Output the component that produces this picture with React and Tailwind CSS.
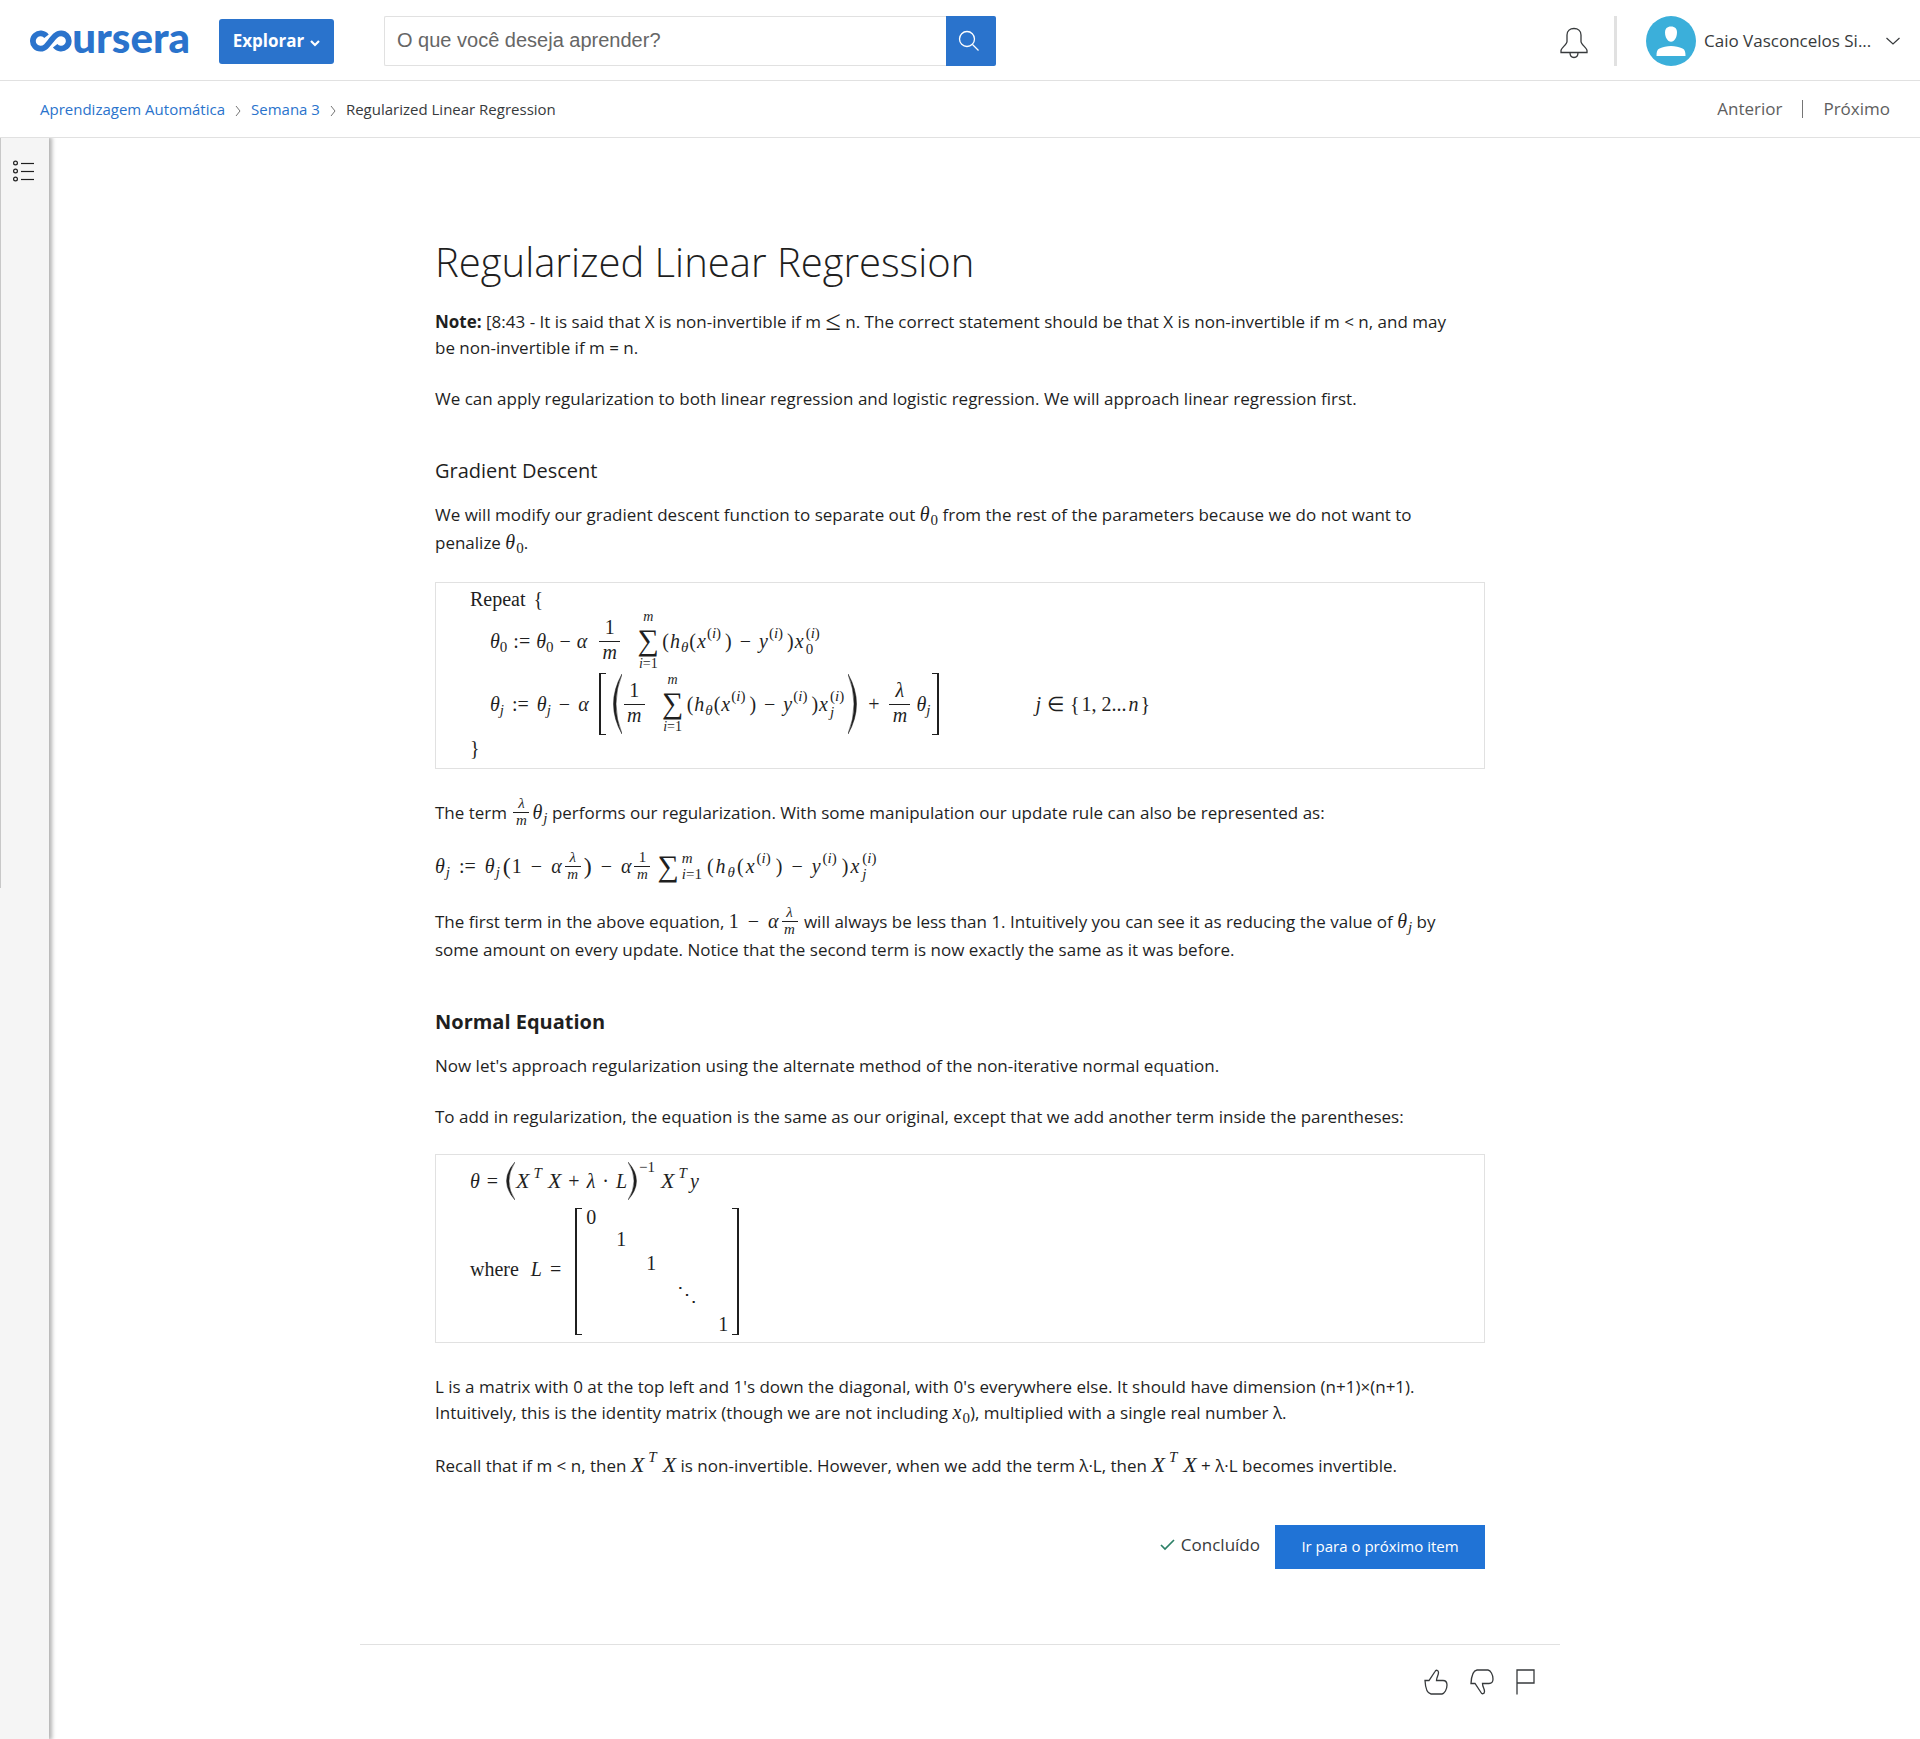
import React from "react";

const cx = (...c) => c.filter(Boolean).join(" ");

/* ---------- maths typesetting ---------- */

function Math({ children }) {
  return (
    <span className="-my-3 inline-flex h-7 items-center gap-px whitespace-nowrap pb-1 align-middle font-['Liberation_Serif',serif] text-[20px] leading-none">
      {children}
    </span>
  );
}

function Row({ children, className }) {
  return (
    <div className={cx("flex items-center whitespace-nowrap font-['Liberation_Serif',serif] text-[20px] leading-none", className)}>
      {children}
    </div>
  );
}

const Sub = ({ children }) => <sub className="static mt-3 text-[15px] leading-none align-baseline">{children}</sub>;
const Sup = ({ children }) => <sup className="static mb-4 text-[15px] leading-none align-baseline">{children}</sup>;
const Op = ({ children }) => <span className="mx-2">{children}</span>;

function Both({ sub, sup }) {
  return (
    <span className="ml-0.5 flex flex-col justify-center text-[15px] leading-none">
      <sup className="static mb-px text-[15px] leading-none align-baseline">{sup}</sup>
      <sub className="static text-[15px] leading-none align-baseline">{sub}</sub>
    </span>
  );
}

function Frac({ top, bottom, small }) {
  return (
    <span className={cx("flex flex-col items-center", small ? "mx-0.5 w-4 text-[15px]" : "w-[21px] text-[20px]")}>
      <span className={small ? "pb-px" : "pb-1"}>{top}</span>
      <span className="h-px w-full bg-[#1f1f1f]" />
      <span className={small ? "" : "pb-1"}>{bottom}</span>
    </span>
  );
}

function Sum() {
  return (
    <span className="flex w-7 flex-col items-center">
      <i className="text-[14px] leading-[14px]">m</i>
      <span className="text-[30px] leading-[32px]">∑</span>
      <span className="text-[14px] leading-[16px]"><i>i</i>=1</span>
    </span>
  );
}

const Idx = () => <>(<i>i</i>)</>;

function Summand({ sub }) {
  return (
    <>
      <span>(</span>
      <i className="mx-px">h</i>
      <Sub><i>θ</i></Sub>
      <span className="mx-px">(</span>
      <i className="mr-px">x</i>
      <Sup><Idx /></Sup>
      <span className="ml-1">)</span>
      <Op>−</Op>
      <i className="mr-px">y</i>
      <Sup><Idx /></Sup>
      <span className="ml-1">)</span>
      <i className="ml-px">x</i>
      <Both sup={<Idx />} sub={sub} />
    </>
  );
}

function Paren({ right, tall }) {
  return (
    <svg
      className={cx("shrink-0", tall ? "h-[60px] w-[10px]" : "h-[38px] w-[10px]")}
      viewBox="0 0 10 60"
      preserveAspectRatio="none"
      aria-hidden="true"
    >
      <path d={right ? "M0 0Q17 30 0 60Q12 30 0 0" : "M10 0Q-7 30 10 60Q-2 30 10 0"} fill="#1f1f1f" stroke="#1f1f1f" strokeWidth="0.5" />
    </svg>
  );
}

function Bracket({ right, className }) {
  return <span className={cx("w-[7px] shrink-0 border-y border-[#1f1f1f]", right ? "border-r-2" : "border-l-2", className)} />;
}

const LambdaM = ({ small }) => <Frac small={small} top={<i>λ</i>} bottom={<i>m</i>} />;
const ThetaJ = () => (<><i>θ</i><Sub><i>j</i></Sub></>);
const Theta0 = () => (<><i>θ</i><Sub>0</Sub></>);
const BigX = () => <i className="text-[22px]">X</i>;
const XT = () => (<><BigX /><span className="w-0.5" /><Sup><i>T</i></Sup></>);
const XTX = () => (<><XT /><span className="w-1" /><BigX /></>);

function GradientBox() {
  return (
    <div className="mt-[25px] border border-[#e1e1e1] pb-[9px] pl-[34px]">
      <Row className="h-8 gap-2"><span>Repeat</span><span>{"{"}</span></Row>
      <Row className="h-[52px] pl-5">
        <Theta0 /><span className="mx-1.5">:=</span><Theta0 />
        <span className="mx-1.5">−</span><i className="mr-3">α</i>
        <Frac top="1" bottom={<i>m</i>} />
        <span className="w-[14px]" />
        <Sum />
        <Summand sub="0" />
      </Row>
      <Row className="h-[74px] pl-5">
        <ThetaJ /><Op>:=</Op><ThetaJ />
        <Op>−</Op><i className="mr-2.5">α</i>
        <Bracket className="h-[62px]" />
        <span className="w-1.5" />
        <Paren tall />
        <span className="w-0.5" />
        <Frac top="1" bottom={<i>m</i>} />
        <span className="w-[14px]" />
        <Sum />
        <Summand sub={<i>j</i>} />
        <span className="w-1" />
        <Paren tall right />
        <span className="mx-2.5">+</span>
        <LambdaM />
        <span className="w-1.5" />
        <ThetaJ />
        <span className="w-0.5" />
        <Bracket right className="h-[62px]" />
        <span className="ml-24"><i>j</i></span>
        <span className="mx-1.5">∈</span>
        <span>{"{"}</span>
        <span className="mx-0.5">1, 2...</span>
        <i>n</i>
        <span className="ml-0.5">{"}"}</span>
      </Row>
      <Row className="h-[18px] pb-1">{"}"}</Row>
    </div>
  );
}

function MatrixBox() {
  const cells = ["0", "1", "1", "⋱", "1"];
  return (
    <div className="mt-6 border border-[#e1e1e1] pb-[7px] pl-[34px]">
      <Row className="h-[52px] gap-px">
        <i>θ</i><span className="mx-1.5">=</span>
        <Paren />
        <XTX />
        <span className="mx-1.5">+</span><i>λ</i><span className="mx-1.5">·</span><i>L</i>
        <Paren right />
        <span className="mb-7 text-[15px]">−1</span>
        <span className="w-1" />
        <XT /><i className="ml-0.5">y</i>
      </Row>
      <Row className="h-32">
        <span className="pb-1">where</span><i className="ml-3 pb-1">L</i><span className="mx-2 pb-1">=</span>
        <span className="w-1.5" />
        <Bracket className="h-[127px]" />
        <span className="grid h-32 grid-cols-[10px_10px_10px_22px_10px] grid-rows-[20px_24px_24px_38px_22px] gap-x-5 px-[4px]">
          {cells.flatMap((c, r) =>
            cells.map((_, k) => (
              <span key={r + "-" + k} className="flex items-center justify-center">
                {r === k ? c : ""}
              </span>
            ))
          )}
        </span>
        <Bracket right className="h-[127px]" />
      </Row>
    </div>
  );
}

/* ---------- icons ---------- */

const Logo = () => (
  <a href="#" aria-label="coursera" className="flex w-[160px] shrink-0 items-center text-[#2a73cc]">
    <svg width="44" height="24" viewBox="0 0 44 24" fill="none" stroke="currentColor" strokeWidth="6" aria-hidden="true">
      <path d="M17.200 7A8 8 0 1 0 16.700 17.700C19.500 15 23.500 9 26.700 6.300A8 8 0 1 1 26.200 17" />
    </svg>
    <span className="-mt-2 font-['Lato',sans-serif] text-[42px] font-black leading-[40px]">ursera</span>
  </a>
);

const SearchIcon = () => (
  <svg width="22" height="22" viewBox="0 0 22 22" fill="none" stroke="#fff" strokeWidth="1.3" aria-hidden="true">
    <circle cx="9" cy="9" r="7.500" /><path d="M14.500 14.500L20.500 20.500" />
  </svg>
);

const BellIcon = () => (
  <svg width="28" height="32" viewBox="0 0 28 32" fill="none" stroke="#373a3c" strokeWidth="1.3" aria-hidden="true">
    <path d="M1 25.500V23.500C1 21 7 17.500 7 14.500V8C7 4 10 1.500 14 1.500S21 4 21 8V14.500C21 17.500 27 21 27 23.500V25.500Z" />
    <path d="M10 25.500C10 28.500 11.500 30.500 14 30.500S18 28.500 18 25.500" />
  </svg>
);

const Avatar = () => (
  <svg width="50" height="50" viewBox="0 0 50 50" aria-hidden="true">
    <circle cx="25" cy="25" r="25" fill="#3bafda" />
    <path d="M25 10.500C29 10.500 31 12.700 31 16.500C31 21 28.500 25.700 25 25.700S19 21 19 16.500C19 12.700 21 10.500 25 10.500Z" fill="#fff" />
    <path d="M10.500 40C10.500 36 11 33.500 13.500 32.500C20 29 30 29 36.500 32.500C39 33.500 39.500 36 39.500 40Z" fill="#fff" />
  </svg>
);

const Chevron = ({ className, w = 2, size = 8, d = "M1 1L4 4.500L7 1", h = 6 }) => (
  <svg className={className} width={size} height={h} viewBox={`0 0 ${size} ${h}`} fill="none" stroke="currentColor" strokeWidth={w} aria-hidden="true">
    <path d={d} />
  </svg>
);

const CrumbArrow = () => <Chevron className="mt-1 text-[#757575]" size={6} h={12} w={1} d="M1 1L5 6L1 11" />;

const thumb = "M1 11.500H5L11 2.500C12 .5 14.500 1 14.500 3.500C14.500 6.500 12.500 8 12.500 11.500H19C22 11.500 23 13.500 23 16C23 20.500 20.500 24.500 18 25H7C3.500 24.500 1.500 21 1 11.500Z";

const ThumbIcon = ({ down }) => (
  <svg className={down ? "rotate-180 -scale-x-100" : ""} width="24" height="26" viewBox="0 0 24 26" fill="none" stroke="#373a3c" strokeWidth="1.3" aria-hidden="true">
    <path d={thumb} />
  </svg>
);

const FlagIcon = () => (
  <svg width="19" height="26" viewBox="0 0 19 26" fill="none" stroke="#373a3c" strokeWidth="1.3" aria-hidden="true">
    <path d="M1 25.500V1H18V14H1" />
  </svg>
);

const ListIcon = () => (
  <svg width="22" height="22" viewBox="0 0 22 22" fill="none" stroke="#1f1f1f" strokeWidth="1.200" aria-hidden="true">
    {[3, 11, 19].map((y) => (
      <g key={y}><circle cx="2.500" cy={y} r="1.900" /><path d={`M8 ${y}.500H21`} /></g>
    ))}
  </svg>
);

/* ---------- page ---------- */

function Header() {
  return (
    <header className="flex h-[81px] items-center border-b border-[#e1e1e1] pl-[30px] pr-5 pt-0.5">
      <Logo />
      <button className="ml-[29px] flex h-[45px] w-[115px] shrink-0 items-center justify-center gap-1.5 rounded-[3px] bg-[#2a73cc] text-[17px] font-bold text-white">
        Explorar
        <Chevron className="mt-1" size={10} h={7} w={2.2} d="M1 1L5 5L9 1" />
      </button>
      <form className="ml-[50px] flex h-[50px] w-[612px]">
        <input
          aria-label="Buscar"
          placeholder="O que você deseja aprender?"
          className="min-w-0 flex-1 rounded-l-[2px] border border-r-0 border-[#e1e1e1] px-3 pb-0.5 font-['Liberation_Sans',sans-serif] text-[20px] text-[#373a3c] outline-none placeholder:text-[#666]"
        />
        <button type="button" aria-label="Pesquisar" className="flex w-[50px] items-center justify-center rounded-r-[2px] bg-[#2a73cc] pr-1">
          <SearchIcon />
        </button>
      </form>
      <div className="ml-auto flex shrink-0 items-center">
        <button aria-label="Notificações" className="mt-1"><BellIcon /></button>
        <span className="ml-[26px] h-[50px] w-[3px] bg-[#e1e1e1]" />
        <button className="ml-[29px] flex items-center text-[17px] text-[#373a3c]">
          <Avatar />
          <span className="ml-2 w-[174px] text-left">Caio Vasconcelos Si...</span>
          <Chevron className="ml-2" size={14} h={8} w={1.2} d="M.5 1L7 7L13.500 1" />
        </button>
      </div>
    </header>
  );
}

function Crumbs() {
  return (
    <div className="flex h-[57px] items-center justify-between border-b border-[#e1e1e1] pl-10 pr-[30px]">
      <nav className="flex items-center gap-[10px] text-[15px] text-[#2a73cc]">
        <a href="#">Aprendizagem Automática</a>
        <CrumbArrow />
        <a href="#">Semana 3</a>
        <CrumbArrow />
        <span className="text-[#373a3c]">Regularized Linear Regression</span>
      </nav>
      <nav className="flex items-center gap-5 text-[17px] text-[#5e5e5e]">
        <a href="#">Anterior</a>
        <span className="h-[18px] w-px bg-[#757575]" />
        <a href="#">Próximo</a>
      </nav>
    </div>
  );
}

function Article() {
  return (
    <article className="mx-auto w-full max-w-[1050px] text-[17px] leading-[26px]">
      <h1 className="text-[40px] font-light leading-[48px]">Regularized Linear Regression</h1>
      <p className="mt-[23px]">
        <strong>Note:</strong> [8:43 - It is said that X is non-invertible if m <Math><span className="text-[28px]">≤</span></Math> n. The correct statement should be that X is
        non-invertible if m &lt; n, and may<br />be non-invertible if m = n.
      </p>
      <p className="mt-[25px]">We can apply regularization to both linear regression and logistic regression. We will approach linear regression first.</p>

      <h2 className="mt-[45px] text-[20px] leading-7">Gradient Descent</h2>
      <p className="mt-4 leading-7">
        We will modify our gradient descent function to separate out <Math><Theta0 /></Math> from the rest of the parameters because we do not want to<br />
        penalize <Math><Theta0 /></Math>.
      </p>
      <GradientBox />
      <p className="mt-[30px] leading-7">
        The term <Math><LambdaM small /><ThetaJ /></Math> performs our regularization. With some manipulation our update rule can also be represented as:
      </p>
      <p className="mt-[27px] flex h-7 items-center">
        <Math>
          <ThetaJ /><Op>:=</Op><ThetaJ />
          <span className="ml-0.5 text-[24px]">(</span>1<Op>−</Op><i>α</i><LambdaM small /><span className="text-[24px]">)</span>
          <Op>−</Op><i>α</i><Frac small top="1" bottom={<i>m</i>} />
          <span className="ml-1 text-[30px]">∑</span>
          <Both sup={<i>m</i>} sub={<><i>i</i>=1</>} />
          <span className="ml-1 flex items-center gap-px"><Summand sub={<i>j</i>} /></span>
        </Math>
      </p>
      <p className="mt-[26px] leading-7">
        The first term in the above equation, <Math>1<Op>−</Op><i>α</i><LambdaM small /></Math> will always be less than 1. Intuitively you can see it as reducing the value of <Math><ThetaJ /></Math> by<br />
        some amount on every update. Notice that the second term is now exactly the same as it was before.
      </p>

      <h2 className="mt-11 text-[20px] font-bold leading-7">Normal Equation</h2>
      <p className="mt-[17px]">Now let's approach regularization using the alternate method of the non-iterative normal equation.</p>
      <p className="mt-[25px]">To add in regularization, the equation is the same as our original, except that we add another term inside the parentheses:</p>
      <MatrixBox />
      <p className="mt-[31px]">
        L is a matrix with 0 at the top left and 1's down the diagonal, with 0's everywhere else. It should have dimension (n+1)×(n+1).<br />
        Intuitively, this is the identity matrix (though we are not including <Math><i>x</i><Sub>0</Sub></Math>), multiplied with a single real number λ.
      </p>
      <p className="mt-[27px]">
        Recall that if m &lt; n, then <Math><XTX /></Math> is non-invertible. However, when we add the term λ·L, then <Math><XTX /></Math> + λ·L becomes invertible.
      </p>

      <div className="mt-[46px] flex items-center justify-end gap-[15px]">
        <span className="flex items-center gap-[6px] pb-1 text-[#373a3c]">
          <svg width="15" height="12" viewBox="0 0 15 12" fill="none" stroke="#2c8067" strokeWidth="1.700" aria-hidden="true"><path d="M1 6L5 10L14 1" /></svg>
          Concluído
        </span>
        <button className="h-11 w-[210px] bg-[#2073d6] pb-0.5 text-[15px] text-white">Ir para o próximo item</button>
      </div>
    </article>
  );
}

export default function App() {
  return (
    <div className="flex min-h-screen flex-col bg-white font-['Open_Sans',sans-serif] text-[#1f1f1f]">
      <Header />
      <Crumbs />
      <div className="flex flex-1">
        <aside className="w-[49px] shrink-0 bg-[#f5f5f5] shadow-[2px_0_4px_1px_rgba(0,0,0,0.3)] [clip-path:inset(0_-10px_0_0)]">
          <div className="h-[750px] border-l border-[#c8c8c8] pl-[12px] pt-[22px]">
            <button aria-label="Lista de itens"><ListIcon /></button>
          </div>
        </aside>
        <main className="-ml-[49px] flex-1 pt-[100px]">
          <Article />
          <div className="mx-auto mt-[75px] flex w-full max-w-[1200px] justify-end gap-[22px] border-t border-[#e1e1e1] pr-[25px] pt-6">
            <button aria-label="Gostei"><ThumbIcon /></button>
            <button aria-label="Não gostei"><ThumbIcon down /></button>
            <button aria-label="Denunciar"><FlagIcon /></button>
          </div>
        </main>
      </div>
    </div>
  );
}
